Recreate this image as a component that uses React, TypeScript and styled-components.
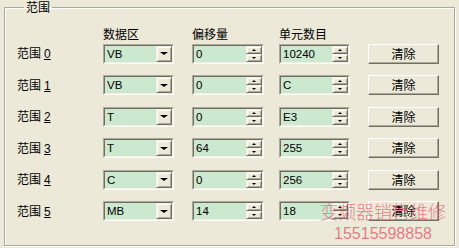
import React from "react";
import styled, { createGlobalStyle } from "styled-components";

const Global = createGlobalStyle`
  html, body {
    margin: 0;
    padding: 0;
    background: #ece9d8;
  }
  body {
    font-family: "Noto Sans CJK SC", "Liberation Sans", sans-serif;
    font-size: 12px;
    color: #000;
  }
`;

const Page = styled.div`
  position: relative;
  width: 459px;
  height: 248px;
  padding: 0 0 0 4px;
  box-sizing: border-box;
  overflow: hidden;
`;

const Group = styled.fieldset`
  margin: 0;
  width: 451px;
  height: 246px;
  box-sizing: border-box;
  padding: 4px 0 0 12px;
  border: 1px solid #aca899;
  box-shadow: inset 1px 1px 0 #fff, 1px 1px 0 #fff;
  min-inline-size: 0;
`;

const Title = styled.legend`
  margin-left: 7px;
  padding: 0 2px;
  font-size: 12px;
  line-height: 14px;
`;

const Grid = styled.div`
  display: grid;
  grid-template-columns: 86px 89px 87px 89px 71px;
  grid-template-rows: 14px repeat(6, 20px);
  row-gap: 11.5px;
  align-items: center;
`;

const Head = styled.div`
  line-height: 14px;
  white-space: nowrap;
  align-self: end;
  margin-bottom: -9px;
`;

const RowLabel = styled.div`
  line-height: 14px;
  white-space: nowrap;
  u {
    font-family: "Liberation Sans", sans-serif;
    font-size: 12px;
    margin-left: 3px;
  }
`;

const Sunken = styled.div<{ $w: number }>`
  width: ${(p) => p.$w}px;
  height: 20px;
  box-sizing: border-box;
  border-top: 1px solid #aca899;
  border-left: 1px solid #aca899;
  border-right: 1px solid #fff;
  border-bottom: 1px solid #fff;
`;

const Inner = styled.div`
  display: flex;
  height: 100%;
  box-sizing: border-box;
  border-top: 1px solid #716f64;
  border-left: 1px solid #716f64;
  border-right: 1px solid #f1efe2;
  border-bottom: 1px solid #f1efe2;
  background: #cce8cf;
`;

const Value = styled.div`
  flex: 1;
  padding-left: 2px;
  font-family: "Liberation Sans", sans-serif;
  font-size: 11.5px;
  line-height: 16px;
  overflow: hidden;
  white-space: nowrap;
`;

const Raised = styled.div`
  box-sizing: border-box;
  background: #ece9d8;
  border-top: 1px solid #f1efe2;
  border-left: 1px solid #f1efe2;
  border-right: 1px solid #716f64;
  border-bottom: 1px solid #716f64;
  box-shadow: inset 1px 1px 0 #fff, inset -1px -1px 0 #aca899;
  display: flex;
  align-items: center;
  justify-content: center;
`;

const DropBtn = styled(Raised)`
  width: 16px;
  height: 100%;
`;

const SpinCol = styled.div`
  display: flex;
  flex-direction: column;
  width: 16px;
  height: 100%;
`;

const SpinBtn = styled(Raised)`
  flex: 1;
`;

const Tri = styled.span<{ $up?: boolean; $size: number }>`
  width: 0;
  height: 0;
  border-left: ${(p) => p.$size}px solid transparent;
  border-right: ${(p) => p.$size}px solid transparent;
  ${(p) =>
    p.$up
      ? `border-bottom: ${Math.ceil(p.$size / 1.5)}px solid #000;`
      : `border-top: ${Math.ceil(p.$size / 1.5)}px solid #000;`}
`;

const Button = styled(Raised)`
  width: 71px;
  height: 20px;
  font-size: 12px;
  line-height: 14px;
  border-top-color: #fff;
  border-left-color: #fff;
  border-right-color: #716f64;
  border-bottom-color: #716f64;
  box-shadow: inset -1px -1px 0 #aca899;
`;

const Watermark = styled.div`
  position: absolute;
  left: 318px;
  top: 198px;
  width: 130px;
  color: rgba(226, 78, 100, 0.72);
  text-align: center;
  white-space: nowrap;
  pointer-events: none;
`;

const MarkTitle = styled.div`
  font-family: "Noto Sans CJK SC", sans-serif;
  font-size: 18px;
  font-weight: 300;
  line-height: 26px;
`;

const MarkPhone = styled.div`
  font-family: "Liberation Sans", sans-serif;
  font-size: 16px;
  line-height: 20px;
`;

const rows = [
  ["VB", "0", "10240"],
  ["VB", "0", "C"],
  ["T", "0", "E3"],
  ["T", "64", "255"],
  ["C", "0", "256"],
  ["MB", "14", "18"],
];

function Combo({ value }: { value: string }) {
  return (
    <Sunken $w={71}>
      <Inner>
        <Value>{value}</Value>
        <DropBtn>
          <Tri $size={4} />
        </DropBtn>
      </Inner>
    </Sunken>
  );
}

function Spin({ value, w }: { value: string; w: number }) {
  return (
    <Sunken $w={w}>
      <Inner>
        <Value>{value}</Value>
        <SpinCol>
          <SpinBtn>
            <Tri $up $size={2} />
          </SpinBtn>
          <SpinBtn>
            <Tri $size={2} />
          </SpinBtn>
        </SpinCol>
      </Inner>
    </Sunken>
  );
}

export default function App() {
  return (
    <>
      <Global />
      <Page>
        <Group>
          <Title>范围</Title>
          <Grid>
            <div />
            <Head>数据区</Head>
            <Head>偏移量</Head>
            <Head>单元数目</Head>
            <div />
            {rows.map((r, i) => (
              <React.Fragment key={i}>
                <RowLabel>
                  范围<u>{i}</u>
                </RowLabel>
                <Combo value={r[0]} />
                <Spin value={r[1]} w={72} />
                <Spin value={r[2]} w={71} />
                <Button>清除</Button>
              </React.Fragment>
            ))}
          </Grid>
        </Group>
        <Watermark>
          <MarkTitle>变频器销售维修</MarkTitle>
          <MarkPhone>15515598858</MarkPhone>
        </Watermark>
      </Page>
    </>
  );
}
